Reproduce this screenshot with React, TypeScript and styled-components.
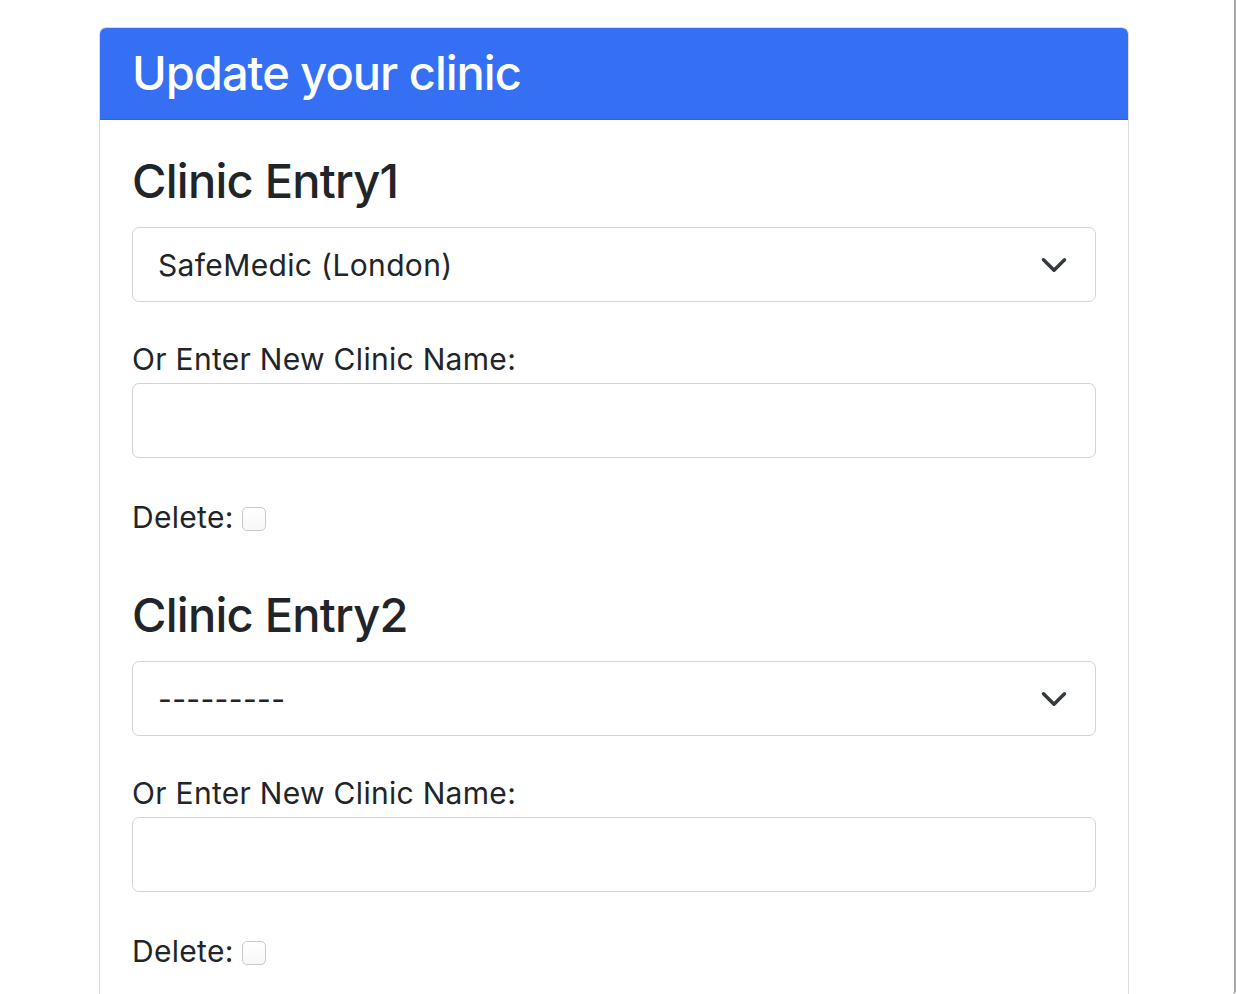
import React from "react";
import styled, { createGlobalStyle } from "styled-components";

const GlobalStyle = createGlobalStyle`
  html, body {
    margin: 0;
    padding: 0;
    background: #ffffff;
  }
  body {
    font-family: Inter, "Noto Sans", "Liberation Sans", sans-serif;
    color: #212529;
    -webkit-font-smoothing: antialiased;
  }
  * { box-sizing: border-box; }
`;

const Page = styled.div`
  position: relative;
  height: 994px;
  padding: 27px 0 0 99px;
  overflow: hidden;
`;

const WindowEdge = styled.div`
  position: absolute;
  top: 0;
  right: 0;
  width: 3px;
  height: 994px;
  border-right: 2px solid #a8a8a8;
  border-bottom-right-radius: 8px;
`;

const Card = styled.section`
  width: 1030px;
  border: 1px solid #dcdcdc;
  border-bottom: none;
  border-radius: 7px 7px 0 0;
  overflow: hidden;
  background: #fff;
`;

const CardHeader = styled.header`
  height: 92px;
  background: #346ff4;
  border-bottom: 1px solid #2e63da;
  padding: 0 32px 2px;
  display: flex;
  align-items: center;
`;

const Title = styled.h1`
  margin: 0;
  font-size: 47px;
  font-weight: 500;
  color: #ffffff;
  letter-spacing: -1px;
  line-height: 56px;
`;

const CardBody = styled.div`
  padding: 33px 32px 0;
  display: flex;
  flex-direction: column;
`;

const Entry = styled.div`
  display: flex;
  flex-direction: column;
  margin-bottom: 52px;
`;

const EntryHeading = styled.h3`
  margin: 0 0 18px;
  font-size: 47px;
  font-weight: 500;
  line-height: 56px;
  letter-spacing: -0.75px;
  color: #212529;
`;

const SelectWrap = styled.div`
  position: relative;
  width: 964px;
  height: 75px;
`;

const Select = styled.select`
  appearance: none;
  -webkit-appearance: none;
  width: 100%;
  height: 100%;
  border: 1.5px solid #ced4da;
  border-radius: 7px;
  background: #fff;
  padding: 0 70px 0 25px;
  font-family: inherit;
  font-size: 30px;
  letter-spacing: 0.35px;
  color: #212529;
  outline: none;
`;

const Chevron = styled.svg`
  position: absolute;
  right: 28px;
  top: 50%;
  width: 28px;
  height: 28px;
  margin-top: -14px;
  pointer-events: none;
`;

const FieldLabel = styled.label`
  display: block;
  margin: 39px 0 6px;
  font-size: 30px;
  line-height: 36px;
  letter-spacing: 0.3px;
  color: #212529;
`;

const TextInput = styled.input`
  width: 964px;
  height: 75px;
  border: 1.5px solid #ced4da;
  border-radius: 7px;
  background: #fff;
  padding: 0 25px;
  font-family: inherit;
  font-size: 30px;
  outline: none;
`;

const DeleteRow = styled.label`
  display: flex;
  align-items: center;
  gap: 8px;
  margin-top: 41px;
  font-size: 30px;
  line-height: 36px;
  letter-spacing: 0.3px;
  color: #212529;
`;

const Check = styled.input`
  appearance: none;
  -webkit-appearance: none;
  margin: 4px 0 0;
  width: 24px;
  height: 24px;
  border: 1px solid #c9c9c9;
  border-radius: 5px;
  background: linear-gradient(#ffffff, #f7f7f7);
`;

type EntryProps = { index: number; options: string[]; value: string };

function ClinicEntry({ index, options, value }: EntryProps) {
  return (
    <Entry>
      <EntryHeading>Clinic Entry{index}</EntryHeading>
      <SelectWrap>
        <Select defaultValue={value}>
          {options.map((o) => (
            <option key={o} value={o}>
              {o}
            </option>
          ))}
        </Select>
        <Chevron viewBox="0 0 16 16" fill="none">
          <path
            d="M2 5l6 6 6-6"
            stroke="#343a40"
            strokeWidth="2"
            strokeLinecap="round"
            strokeLinejoin="round"
          />
        </Chevron>
      </SelectWrap>
      <FieldLabel>Or Enter New Clinic Name:</FieldLabel>
      <TextInput type="text" />
      <DeleteRow>
        Delete:
        <Check type="checkbox" />
      </DeleteRow>
    </Entry>
  );
}

export default function App() {
  const options = ["---------", "SafeMedic (London)"];
  return (
    <>
      <GlobalStyle />
      <Page>
        <Card>
          <CardHeader>
            <Title>Update your clinic</Title>
          </CardHeader>
          <CardBody>
            <ClinicEntry index={1} options={options} value="SafeMedic (London)" />
            <ClinicEntry index={2} options={options} value="---------" />
          </CardBody>
        </Card>
        <WindowEdge />
      </Page>
    </>
  );
}
